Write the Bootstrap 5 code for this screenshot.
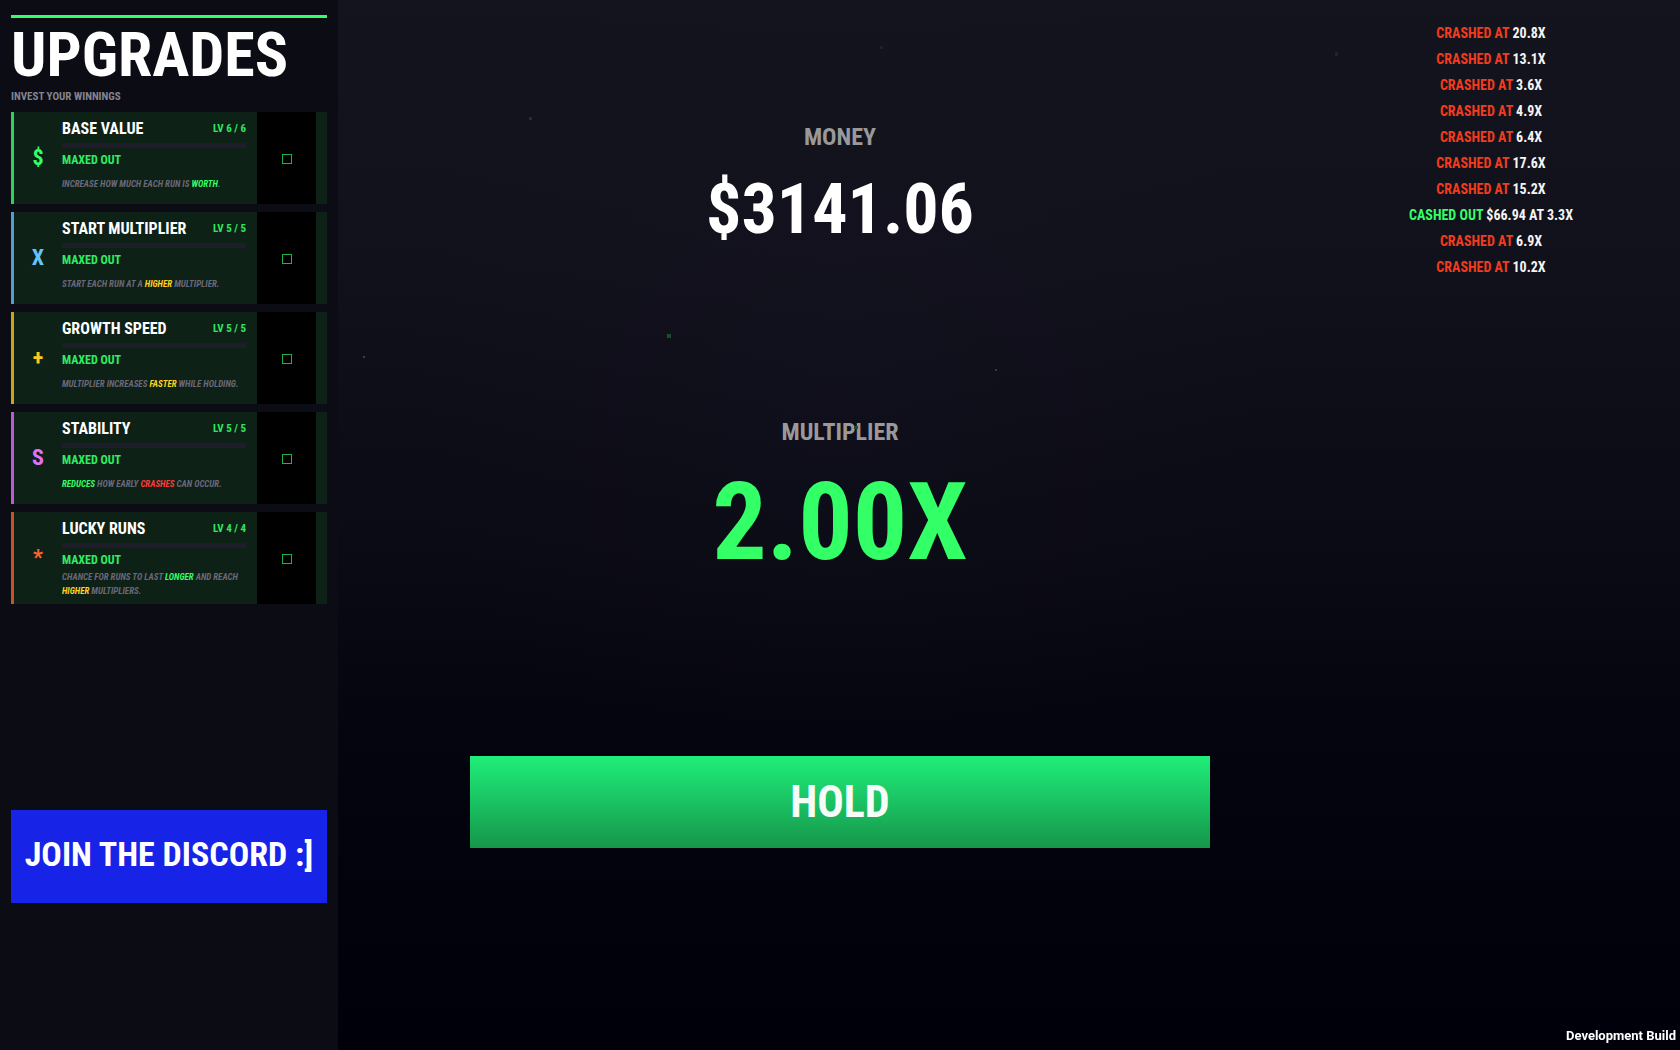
<!DOCTYPE html>
<html lang="en">
<head>
<meta charset="utf-8">
<meta name="viewport" content="width=device-width, initial-scale=1">
<title>Crash</title>
<link href="https://cdn.jsdelivr.net/npm/bootstrap@5.3.0/dist/css/bootstrap.min.css" rel="stylesheet">
<style>
:root{--go:#33ff66;--gold:#ffd21f;--bad:#ff3b38;--dim:#6b687a}
body{font-family:"Roboto Condensed","Liberation Sans Narrow","Liberation Sans",sans-serif;font-weight:700;color:#fff;text-transform:uppercase;
 background:radial-gradient(circle at 50% 35%,rgba(24,22,44,.2),transparent 40%),linear-gradient(#14141e 0%,#11111b 25%,#0b0b15 50%,#04040e 72%,#00000a 100%)}

/* Upgrade sidebar */
.side{flex:0 0 338px;background:#0b0c14;padding:15px 11px 14vh}
.side-rule{height:3px;background:var(--go)}
.side-title{font-size:62px;line-height:70px;font-weight:700;margin:2px 0 0}
.side-sub{font-size:11px;line-height:14px;color:#85848e;margin-bottom:8px}
.upgrades{gap:8px}
.upgrade{height:92px;background:#0d2117;border-left:3px solid var(--tone);padding-right:11px}
.up-icon{flex:0 0 48px;color:var(--ink);font-size:22px;padding-bottom:2px}
.up-body{padding:7px 11px 0 0}
.up-name{font-size:16px;line-height:20px;font-weight:700;margin:0}
.up-level{font-size:11px;color:#2fe75f}
.up-bar{height:5px;background:#1e1d2a;margin:4px 0 2px}
.up-state{font-size:12px;line-height:20px;color:#2fee61}
.up-text{height:28px;font-size:9px;line-height:14px;font-style:italic;color:var(--dim);margin:0}
.up-buy{flex:0 0 59px;background:#000;border:0;border-radius:0}
.tone-green{--tone:#2bd35a;--ink:#33ff66}
.tone-blue{--tone:#539fcb;--ink:#63c5fb}
.tone-gold{--tone:#cda31c;--ink:#fdc91f}
.tone-violet{--tone:#b85ccf;--ink:#e370fd}
.tone-orange{--tone:#cc5129;--ink:#fb6330}
.t-go{color:var(--go)}.t-gold{color:var(--gold)}.t-bad{color:var(--bad)}
.discord{height:93px;background:#1723e6;color:#fff;font-size:34px}
.discord:hover{background:#2b37f5;color:#fff}

/* Play area */
.stage{padding-top:121px}
.stage-label{font-size:24px;line-height:32px;color:#999}
.money{font-size:70px;line-height:80px;margin-top:16px}
.mult-box{margin-top:167px}
.mult{font-size:108px;line-height:120px;margin-top:14px;color:var(--go)}
.hold{width:44vw;height:92px;margin-top:174px;border:0;background:linear-gradient(#1fee7a,#16964a);color:#f6fcf8;font-size:44px;font-weight:700}

/* Run history */
.history{flex:0 0 338px;padding:20px 40px 0 0}
.history li{font-size:14px;line-height:26px;color:#f4f4f4}
.t-crash{color:#f23c1e}
.build{font-family:Roboto,sans-serif;font-size:13px;line-height:16px;padding:0 4px 6px;text-transform:none}

/* Drifting background sparks */
.sparks{position:absolute;inset:0;width:100%;height:100%;pointer-events:none}
</style>
<script src="https://cdn.jsdelivr.net/npm/bootstrap@5.3.0/dist/js/bootstrap.bundle.min.js"></script>
</head>
<body>
<svg class="sparks" aria-hidden="true">
 <rect x="529" y="117" width="3" height="3" fill="#153a2a"/>
 <rect x="667" y="334" width="4" height="4" fill="#17502f"/>
 <rect x="363" y="356" width="2" height="2" fill="#1b5336"/>
 <rect x="995" y="369" width="2" height="2" fill="#1a4a34"/>
 <rect x="880" y="46" width="3" height="3" fill="#1b2229"/>
 <rect x="1335" y="52" width="3" height="4" fill="#16282a"/>
 <rect x="854" y="426" width="4" height="3" fill="#17502f"/>
</svg>
<div class="d-flex min-vh-100">
<aside class="side d-flex flex-column">
 <div class="side-rule"></div>
 <h1 class="side-title">Upgrades</h1>
 <div class="side-sub">Invest your winnings</div>
 <div class="upgrades d-flex flex-column">
  <section class="upgrade tone-green d-flex">
   <div class="up-icon d-flex align-items-center justify-content-center">$</div>
   <div class="up-body flex-grow-1">
    <div class="d-flex justify-content-between align-items-center"><h2 class="up-name">Base value</h2><span class="up-level">Lv 6 / 6</span></div>
    <div class="up-bar"></div>
    <div class="up-state">Maxed out</div>
    <p class="up-text d-flex align-items-center"><span>Increase how much each run is <span class="t-go">worth</span>.</span></p>
   </div>
   <button class="up-buy" type="button" aria-label="Base value maxed"><svg width="10" height="10"><rect x=".5" y=".5" width="9" height="9" fill="none" stroke="#22b049"/></svg></button>
  </section>
  <section class="upgrade tone-blue d-flex">
   <div class="up-icon d-flex align-items-center justify-content-center">X</div>
   <div class="up-body flex-grow-1">
    <div class="d-flex justify-content-between align-items-center"><h2 class="up-name">Start multiplier</h2><span class="up-level">Lv 5 / 5</span></div>
    <div class="up-bar"></div>
    <div class="up-state">Maxed out</div>
    <p class="up-text d-flex align-items-center"><span>Start each run at a <span class="t-gold">higher</span> multiplier.</span></p>
   </div>
   <button class="up-buy" type="button" aria-label="Start multiplier maxed"><svg width="10" height="10"><rect x=".5" y=".5" width="9" height="9" fill="none" stroke="#22b049"/></svg></button>
  </section>
  <section class="upgrade tone-gold d-flex">
   <div class="up-icon d-flex align-items-center justify-content-center">+</div>
   <div class="up-body flex-grow-1">
    <div class="d-flex justify-content-between align-items-center"><h2 class="up-name">Growth speed</h2><span class="up-level">Lv 5 / 5</span></div>
    <div class="up-bar"></div>
    <div class="up-state">Maxed out</div>
    <p class="up-text d-flex align-items-center"><span>Multiplier increases <span class="t-gold">faster</span> while holding.</span></p>
   </div>
   <button class="up-buy" type="button" aria-label="Growth speed maxed"><svg width="10" height="10"><rect x=".5" y=".5" width="9" height="9" fill="none" stroke="#22b049"/></svg></button>
  </section>
  <section class="upgrade tone-violet d-flex">
   <div class="up-icon d-flex align-items-center justify-content-center">S</div>
   <div class="up-body flex-grow-1">
    <div class="d-flex justify-content-between align-items-center"><h2 class="up-name">Stability</h2><span class="up-level">Lv 5 / 5</span></div>
    <div class="up-bar"></div>
    <div class="up-state">Maxed out</div>
    <p class="up-text d-flex align-items-center"><span><span class="t-go">Reduces</span> how early <span class="t-bad">crashes</span> can occur.</span></p>
   </div>
   <button class="up-buy" type="button" aria-label="Stability maxed"><svg width="10" height="10"><rect x=".5" y=".5" width="9" height="9" fill="none" stroke="#22b049"/></svg></button>
  </section>
  <section class="upgrade tone-orange d-flex">
   <div class="up-icon d-flex align-items-center justify-content-center">*</div>
   <div class="up-body flex-grow-1">
    <div class="d-flex justify-content-between align-items-center"><h2 class="up-name">Lucky runs</h2><span class="up-level">Lv 4 / 4</span></div>
    <div class="up-bar"></div>
    <div class="up-state">Maxed out</div>
    <p class="up-text d-flex align-items-center"><span>Chance for runs to last <span class="t-go">longer</span> and reach <span class="t-gold">higher</span> multipliers.</span></p>
   </div>
   <button class="up-buy" type="button" aria-label="Lucky runs maxed"><svg width="10" height="10"><rect x=".5" y=".5" width="9" height="9" fill="none" stroke="#22b049"/></svg></button>
  </section>
 </div>
 <button type="button" class="discord btn rounded-0 border-0 p-0 pb-1 mt-auto w-100 fw-bold text-uppercase text-nowrap">Join the Discord :]</button>
</aside>
<main class="stage flex-grow-1 d-flex flex-column align-items-center">
 <div class="text-center"><div class="stage-label">Money</div><div class="money">$3141.06</div></div>
 <div class="mult-box text-center"><div class="stage-label">Multiplier</div><div class="mult">2.00x</div></div>
 <button type="button" class="hold text-uppercase">Hold</button>
</main>
<ul class="history list-unstyled text-center mb-0">
 <li><span class="t-crash">Crashed at</span> 20.8x</li>
 <li><span class="t-crash">Crashed at</span> 13.1x</li>
 <li><span class="t-crash">Crashed at</span> 3.6x</li>
 <li><span class="t-crash">Crashed at</span> 4.9x</li>
 <li><span class="t-crash">Crashed at</span> 6.4x</li>
 <li><span class="t-crash">Crashed at</span> 17.6x</li>
 <li><span class="t-crash">Crashed at</span> 15.2x</li>
 <li><span class="t-go">Cashed out</span> $66.94 at 3.3x</li>
 <li><span class="t-crash">Crashed at</span> 6.9x</li>
 <li><span class="t-crash">Crashed at</span> 10.2x</li>
</ul>
</div>
<div class="build position-fixed bottom-0 end-0">Development Build</div>
</body>
</html>
